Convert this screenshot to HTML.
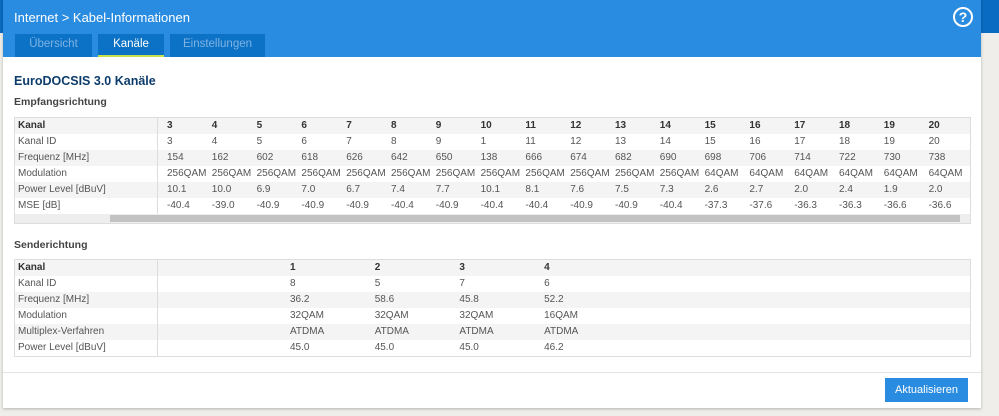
<!DOCTYPE html>
<html><head><meta charset="utf-8"><style>
*{margin:0;padding:0;box-sizing:border-box}
body{width:999px;height:416px;background:#f0eeea;font-family:"Liberation Sans",sans-serif;position:relative;overflow:hidden;color:#555}
.topstrip{position:absolute;left:0;top:0;width:999px;height:33px;background:#0a6bc2}
.panel{position:absolute;left:3px;top:0;width:978px;height:408px;background:#fff;box-shadow:0 1px 3px rgba(0,0,0,.25)}
.head{position:absolute;left:0;top:0;width:978px;height:57px;background:#2a8ce0}
.crumb{position:absolute;left:11px;top:10px;color:#fff;font-size:13px}
.help{position:absolute;left:950px;top:7px;width:20px;height:20px;border:2px solid #fff;border-radius:50%;color:#fff;font-weight:bold;font-size:14px;text-align:center;line-height:16px}
.tab{position:absolute;top:34px;height:23px;background:#0b72c6;color:#7fb3e3;font-size:11.5px;text-align:center;line-height:21px}
.tab.act{color:#fff;border-bottom:2px solid #c8e04a}
h1{position:absolute;left:11px;top:74px;font-size:12.5px;color:#0d3c6b;font-weight:bold}
h2{position:absolute;left:11px;top:96px;font-size:10.5px;color:#444;font-weight:bold}
.tbl{position:absolute;left:11px;width:957px;border:1px solid #ddd;font-size:10px}
.row{height:16px;position:relative;line-height:16px}
.row:nth-child(odd){background:#f4f4f4}
.row span{position:absolute}
.lab{left:3px}
.sep{position:absolute;left:142px;top:0;bottom:0;border-left:1px solid #ddd}
.b{font-weight:bold;color:#333}
.scroll{height:9px;background:#eee;position:relative}
.scroll div{position:absolute;left:95px;top:1px;width:850px;height:7px;background:#c2c2c2}
.foot{position:absolute;left:0;top:372px;width:978px;border-top:1px solid #e4e4e4}
.btn{position:absolute;left:882px;top:378px;width:83px;height:24px;background:#2a8ce0;color:#fff;font-size:11px;text-align:center;line-height:24px}
</style></head><body>
<div class="topstrip"></div>
<div class="panel">
<div class="head"><div class="crumb">Internet &gt; Kabel-Informationen</div><div class="help">?</div>
<div class="tab" style="left:12px;width:77px">Übersicht</div>
<div class="tab act" style="left:95px;width:66px">Kanäle</div>
<div class="tab" style="left:167px;width:95px">Einstellungen</div>
</div>
<h1>EuroDOCSIS 3.0 Kanäle</h1>
<h2>Empfangsrichtung</h2>
<div class="tbl" style="top:117px" id="t1"></div>
<h2 style="top:239px">Senderichtung</h2>
<div class="tbl" style="top:259px" id="t2"></div>
<div class="foot"></div>
<div class="btn">Aktualisieren</div>
</div>
<script>
function build(id,rows,x0,dx,scroll){var h='';rows.forEach(function(r,i){h+='<div class="row"><span class="lab'+(i==0?' b':'')+'">'+r[0]+'</span>';for(var j=1;j<r.length;j++)h+='<span class="'+(i==0?'b':'')+'" style="left:'+(x0+(j-1)*dx)+'px">'+r[j]+'</span>';h+='</div>';});
h+='<div class="sep" style="bottom:'+(scroll?9:0)+'px"></div>';if(scroll)h+='<div class="scroll"><div></div></div>';document.getElementById(id).innerHTML=h;}
var ch=[],fr=[154,162,602,618,626,642,650,138,666,674,682,690,698,706,714,722,730,738],
pw=['10.1','10.0','6.9','7.0','6.7','7.4','7.7','10.1','8.1','7.6','7.5','7.3','2.6','2.7','2.0','2.4','1.9','2.0'],
ms=['-40.4','-39.0','-40.9','-40.9','-40.9','-40.4','-40.9','-40.4','-40.4','-40.9','-40.9','-40.4','-37.3','-37.6','-36.3','-36.3','-36.6','-36.6'],
id=[3,4,5,6,7,8,9,1,11,12,13,14,15,16,17,18,19,20],md=[];
for(var k=3;k<=20;k++){ch.push(k);md.push(k<=14?'256QAM':'64QAM');}
build('t1',[['Kanal'].concat(ch),['Kanal ID'].concat(id),['Frequenz [MHz]'].concat(fr),['Modulation'].concat(md),['Power Level [dBuV]'].concat(pw),['MSE [dB]'].concat(ms)],152,44.8,true);
build('t2',[['Kanal',1,2,3,4],['Kanal ID',8,5,7,6],['Frequenz [MHz]','36.2','58.6','45.8','52.2'],['Modulation','32QAM','32QAM','32QAM','16QAM'],['Multiplex-Verfahren','ATDMA','ATDMA','ATDMA','ATDMA'],['Power Level [dBuV]','45.0','45.0','45.0','46.2']],275,84.7,false);
</script>
</body></html>
